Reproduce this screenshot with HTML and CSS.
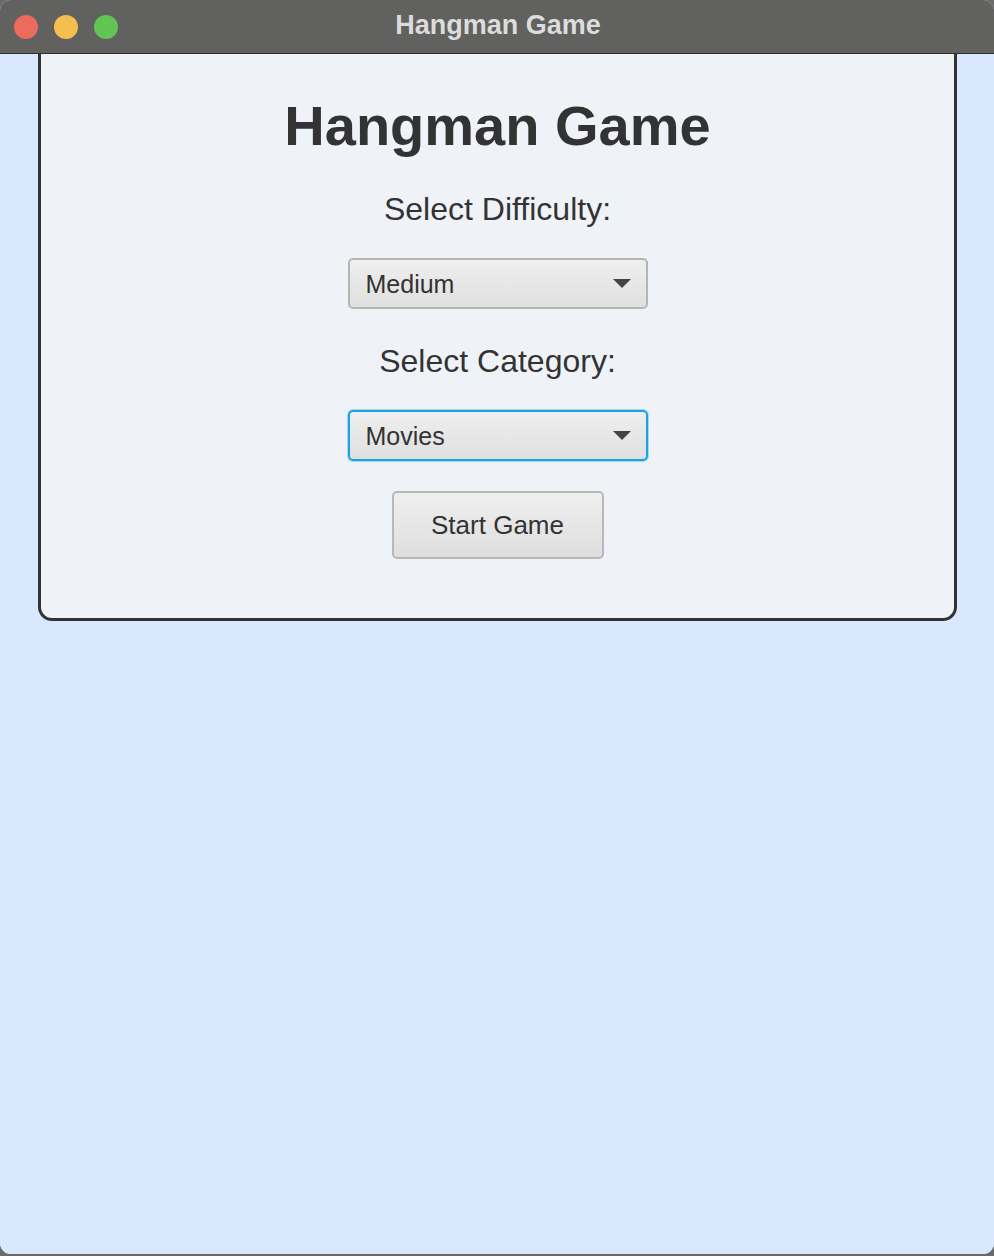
FILE: index.html
```html
<!DOCTYPE html>
<html>
<head>
<meta charset="utf-8">
<link rel="stylesheet" href="styles.css">
</head>
<body>
<div class="window">
  <div class="titlebar">
    <div class="lights">
      <span class="light red"></span>
      <span class="light yellow"></span>
      <span class="light green"></span>
    </div>
    <div class="wintitle">Hangman Game</div>
  </div>
  <div class="content">
    <div class="card">
      <h1 class="heading">Hangman Game</h1>
      <div class="label">Select Difficulty:</div>
      <div class="combo">
        <span class="combo-text">Medium</span>
        <span class="arrow"></span>
      </div>
      <div class="label">Select Category:</div>
      <div class="combo focused">
        <span class="combo-text">Movies</span>
        <span class="arrow"></span>
      </div>
      <div class="button">Start Game</div>
    </div>
  </div>
</div>
</body>
</html>
```

FILE: styles.css
```css
html, body {
  margin: 0;
  padding: 0;
  width: 994px;
  height: 1256px;
  background: #6a6a6a;
  overflow: hidden;
}
.window {
  width: 994px;
  height: 1254px;
  display: flex;
  flex-direction: column;
  border-radius: 11px;
  overflow: hidden;
  background: #d9e8fd;
  font-family: "Liberation Sans", Arial, sans-serif;
}
.titlebar {
  height: 53px;
  flex: none;
  background: #616160;
  border-bottom: 1px solid #2e2e2e;
  display: flex;
  align-items: center;
  position: relative;
}
.lights {
  display: flex;
  gap: 16px;
  padding-left: 14px;
  margin-top: 1px;
}
.light {
  width: 24px;
  height: 24px;
  border-radius: 50%;
  display: block;
}
.red { background: #ed6a5e; }
.yellow { background: #f5bf4f; }
.green { background: #61c554; }
.wintitle {
  position: absolute;
  left: 0;
  right: 0;
  top: 0;
  bottom: 2px;
  display: flex;
  align-items: center;
  justify-content: center;
  color: #dcdcdc;
  font-weight: bold;
  font-size: 27px;
  padding-left: 2px;
}
.content {
  flex: 1;
  background: #d9e8fd;
  padding: 0 37px 0 38px;
}
.card {
  background: #eff3f7;
  border: 3px solid #333333;
  border-top: none;
  border-radius: 0 0 14px 14px;
  display: flex;
  flex-direction: column;
  align-items: center;
  padding: 38px 0 59px;
  color: #333333;
}
.heading {
  margin: 0;
  font-size: 56px;
  font-weight: bold;
  line-height: 68px;
  color: #333333;
}
.label {
  font-size: 32px;
  line-height: 36px;
  margin-top: 31px;
}
.combo {
  margin-top: 31px;
  height: 47px;
  border: 2px solid #b5b5b5;
  border-radius: 5px;
  background: linear-gradient(#efefef, #dfdfdf);
  display: flex;
  align-items: center;
  justify-content: space-between;
  padding: 0 15px 0 16px;
  box-sizing: content-box;
  width: 265px;
}
.combo + .label {
  margin-top: 34px;
}
.combo.focused {
  border-color: #1da2e0;
  box-shadow: 0 0 0 1px rgba(29, 162, 224, 0.35);
}
.combo-text {
  font-size: 25px;
  color: #333333;
  padding-top: 2px;
}
.arrow {
  width: 0;
  height: 0;
  border-left: 9px solid transparent;
  border-right: 9px solid transparent;
  border-top: 9px solid #444444;
}
.button {
  margin-top: 30px;
  width: 208px;
  height: 63px;
  border: 2px solid #b8b8b8;
  border-radius: 5px;
  background: linear-gradient(#efefef, #dedede);
  display: flex;
  align-items: center;
  justify-content: center;
  font-size: 26px;
  color: #333333;
  padding-top: 1px;
}
```
